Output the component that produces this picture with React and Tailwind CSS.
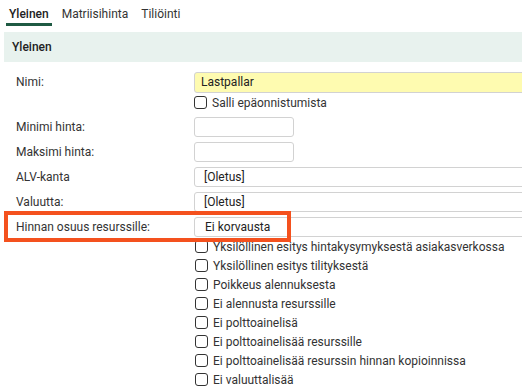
import React from "react";

const tabs = [
  { label: "Yleinen", active: true },
  { label: "Matriisihinta" },
  { label: "Tiliöinti" },
];

const flags = [
  "Yksilöllinen esitys hintakysymyksestä asiakasverkossa",
  "Yksilöllinen esitys tilityksestä",
  "Poikkeus alennuksesta",
  "Ei alennusta resurssille",
  "Ei polttoainelisä",
  "Ei polttoainelisää resurssille",
  "Ei polttoainelisää resurssin hinnan kopioinnissa",
  "Ei valuuttalisää",
];

const Box = () => (
  <span className="block h-[13px] w-[13px] shrink-0 rounded-[3px] border border-[#333] bg-white" />
);

const Row = ({ label, children, className = "" }) => (
  <div className={`flex h-[20.5px] items-center ${className}`}>
    <div className="w-[194px] shrink-0 pl-[16px] text-[12px] leading-[14px] text-[#333]">{label}</div>
    {children}
  </div>
);

const Field = ({ value, wide, yellow, pad = "pl-[6px]" }) => (
  <div
    className={`flex h-[20.5px] items-center rounded-[3px] border border-[#d2d2d2] text-[12px] leading-[14px] text-[#222] ${pad} ${
      wide ? "w-[400px] shrink-0" : "w-[100px]"
    } ${yellow ? "bg-[#fefbb0]" : "bg-white"}`}
  >
    {value}
  </div>
);

export default function App() {
  return (
    <div className="relative h-[391px] w-[522px] overflow-hidden bg-white font-['Roboto',sans-serif]">
      <div className="flex gap-[7px] pl-[6px]">
        {tabs.map((t) => (
          <div key={t.label} className="flex flex-col">
            <div
              className={`px-[3px] pt-[7px] text-[12px] leading-[14px] ${
                t.active ? "font-medium text-[#222]" : "text-[#333]"
              }`}
            >
              {t.label}
            </div>
            <div className={`mt-[2px] h-[3px] ${t.active ? "bg-[#1f5a43]" : ""}`} />
          </div>
        ))}
      </div>

      <div className="ml-[4px] mt-[6px] flex h-[30px] items-center bg-[#e8f2ee] pl-[8px] text-[12px] font-medium text-[#222]">
        Yleinen
      </div>

      <div className="flex flex-col">
        <Row label="Nimi:" className="mt-[10px]">
          <Field value="Lastpallar" wide yellow />
        </Row>
        <div className="flex h-[20.5px] items-center pl-[194px]">
          <Box />
          <span className="ml-[5px] text-[12px] leading-[14px] text-[#333]">Salli epäonnistumista</span>
        </div>
        <Row label="Minimi hinta:" className="mt-[3.5px]">
          <Field />
        </Row>
        <Row label="Maksimi hinta:" className="mt-[4.5px]">
          <Field />
        </Row>
        <Row label="ALV-kanta" className="mt-[4.5px]">
          <Field value="[Oletus]" wide pad="pl-[9px]" />
        </Row>
        <Row label="Valuutta:" className="mt-[4.5px]">
          <Field value="[Oletus]" wide pad="pl-[9px]" />
        </Row>
        <Row label="Hinnan osuus resurssille:" className="mt-[4.5px]">
          <Field value="Ei korvausta" wide pad="pl-[10px]" />
        </Row>
        <div className="flex flex-col pl-[195px]">
          {flags.map((f) => (
            <div key={f} className="flex h-[19.05px] items-center gap-[5px]">
              <Box />
              <span className="text-[12px] leading-[14px] text-[#333]">{f}</span>
            </div>
          ))}
        </div>
      </div>

      <div className="absolute left-[4px] top-[210.5px] h-[31px] w-[287px] border-4 border-[#f4511e]" />
    </div>
  );
}
